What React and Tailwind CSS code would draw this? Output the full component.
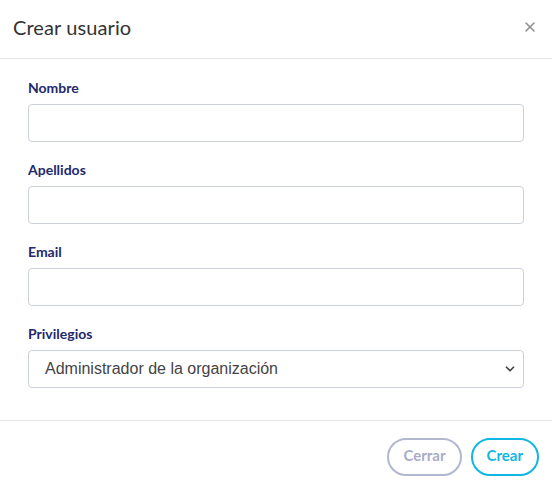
import { ChevronDown, X } from 'lucide-react'

const Field = ({ label, children }) => (
  <div className="mb-[18px]">
    <label className="block text-[14px] leading-[20px] font-bold text-[#23296b] mb-[6px]">{label}</label>
    {children}
  </div>
)

const App = () => {
  return (
    <div className="w-[552px] h-[489px] bg-white font-['Lato',sans-serif] text-[#333]">
      {/* Header */}
      <div className="h-[59px] border-b border-[#e3e5ea] flex items-center justify-between pl-[13px] pr-[14px]">
        <h2 className="text-[20px] text-[#333] leading-none pb-[5px] tracking-[0.1px]">Crear usuario</h2>
        <button className="text-[#8a8a8a] pb-[5px]">
          <X size={16} strokeWidth={2.2} />
        </button>
      </div>

      {/* Body */}
      <div className="px-[28px] pt-[19px] pb-[14px] border-b border-[#e3e5ea]">
        <Field label="Nombre">
          <input className="block w-full h-[38px] rounded-[4px] border border-[#ccd0d9] outline-none" />
        </Field>
        <Field label="Apellidos">
          <input className="block w-full h-[38px] rounded-[4px] border border-[#ccd0d9] outline-none" />
        </Field>
        <Field label="Email">
          <input className="block w-full h-[38px] rounded-[4px] border border-[#ccd0d9] outline-none" />
        </Field>
        <Field label="Privilegios">
          <div className="h-[38px] rounded-[4px] border border-[#ccd0d9] flex items-center justify-between pl-[16px] pr-[6px] font-['Liberation_Sans',sans-serif] text-[16px] text-[#444]">
            <span>Administrador de la organización</span>
            <ChevronDown size={14} strokeWidth={3} className="text-[#444]" />
          </div>
        </Field>
      </div>

      {/* Footer */}
      <div className="flex justify-end gap-[9px] pt-[17px] pr-[13px]">
        <button className="h-[38px] px-[14px] pb-[3px] rounded-full border-2 border-[#b3b6cf] text-[#a9acc8] font-bold text-[15px]">Cerrar</button>
        <button className="h-[38px] px-[14px] pb-[3px] rounded-full border-2 border-[#10b7e3] text-[#10b7e3] font-bold text-[15px]">Crear</button>
      </div>
    </div>
  )
}

export default App
